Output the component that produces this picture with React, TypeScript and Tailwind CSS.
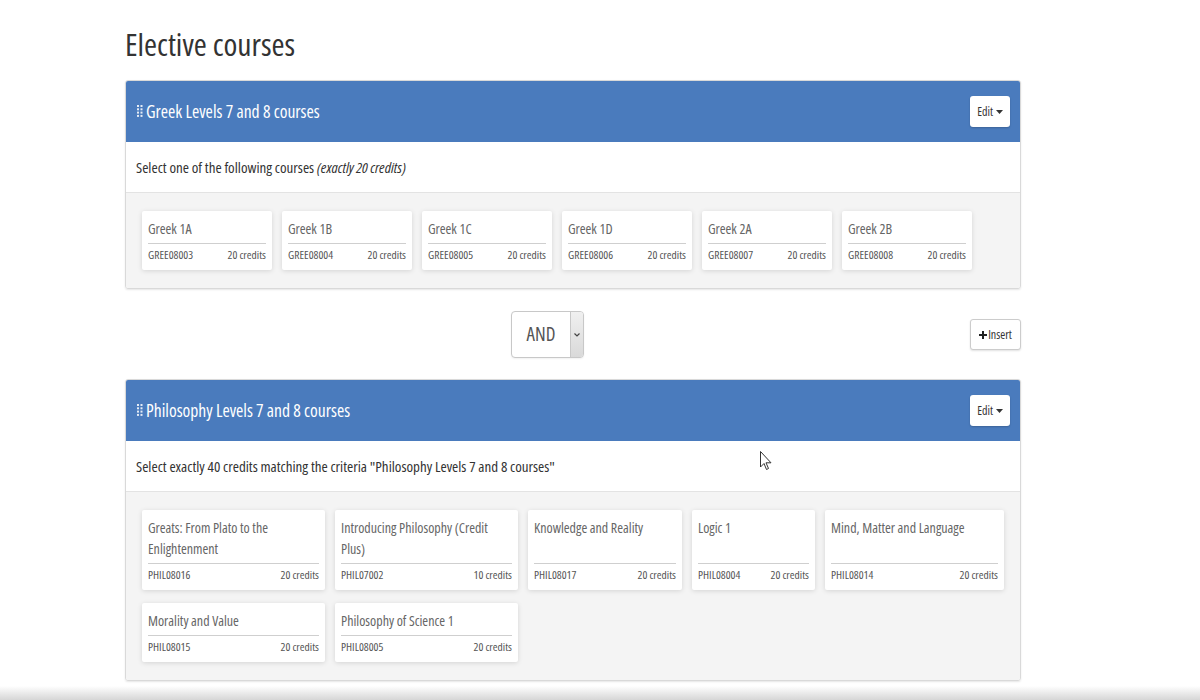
import React from "react";

type Course = { title: string; code: string; credits: string; w: number };

const greek: Course[] = [
  { title: "Greek 1A", code: "GREE08003", credits: "20 credits", w: 130 },
  { title: "Greek 1B", code: "GREE08004", credits: "20 credits", w: 130 },
  { title: "Greek 1C", code: "GREE08005", credits: "20 credits", w: 130 },
  { title: "Greek 1D", code: "GREE08006", credits: "20 credits", w: 130 },
  { title: "Greek 2A", code: "GREE08007", credits: "20 credits", w: 130 },
  { title: "Greek 2B", code: "GREE08008", credits: "20 credits", w: 130 },
];

const phil: Course[] = [
  { title: "Greats: From Plato to the Enlightenment", code: "PHIL08016", credits: "20 credits", w: 183 },
  { title: "Introducing Philosophy (Credit Plus)", code: "PHIL07002", credits: "10 credits", w: 183 },
  { title: "Knowledge and Reality", code: "PHIL08017", credits: "20 credits", w: 154 },
  { title: "Logic 1", code: "PHIL08004", credits: "20 credits", w: 123 },
  { title: "Mind, Matter and Language", code: "PHIL08014", credits: "20 credits", w: 179 },
  { title: "Morality and Value", code: "PHIL08015", credits: "20 credits", w: 183 },
  { title: "Philosophy of Science 1", code: "PHIL08005", credits: "20 credits", w: 183 },
];

function Grip() {
  return (
    <svg width="6" height="13" viewBox="0 0 6 13" className="mr-[3px] shrink-0">
      {[0, 1, 2, 3].map((r) => (
        <g key={r} fill="#ffffff" opacity="0.85">
          <rect x="0" y={r * 3.3} width="2" height="2" />
          <rect x="3.5" y={r * 3.3} width="2" height="2" />
        </g>
      ))}
    </svg>
  );
}

function Card({ c }: { c: Course }) {
  return (
    <div
      className="bg-white flex flex-col shadow-[0_1px_5px_rgba(0,0,0,0.13)] rounded-[2px]"
      style={{ width: c.w }}
    >
      <div className="flex-1 px-[6px] pt-[7px] text-[14px] leading-[21px] text-[#666]">{c.title}</div>
      <div className="mx-[6px] mt-[4px] border-t border-[#cfcfcf]" />
      <div className="flex justify-between px-[6px] pt-[3px] pb-[7px] text-[11.5px] leading-[16px] text-[#555]">
        <span>{c.code}</span>
        <span>{c.credits}</span>
      </div>
    </div>
  );
}

function Panel({ title, desc, courses }: { title: string; desc: React.ReactNode; courses: Course[] }) {
  return (
    <div className="border border-[#d9d9d9] rounded-[3px] shadow-[0_1px_2px_rgba(0,0,0,0.1)] overflow-hidden">
      <div className="h-[61px] bg-[#4a7bbd] flex items-center justify-between pl-[11px] pr-[10px]">
        <div className="flex items-center text-white text-[17.6px]">
          <Grip />
          <span>{title}</span>
        </div>
        <button className="h-[31px] px-[7px] bg-white rounded-[3px] text-[12px] text-[#333] flex items-center gap-[3px] shadow-[0_1px_2px_rgba(0,0,0,0.2)]">
          Edit
          <svg width="7" height="4" viewBox="0 0 7 4">
            <path d="M0 0h7L3.5 4z" fill="#333" />
          </svg>
        </button>
      </div>
      <div className="h-[51px] flex items-center px-[10px] text-[15px] text-[#333] bg-white border-b border-[#e3e3e3]">
        {desc}
      </div>
      <div className="bg-[#f4f4f4] pt-[18px] pb-[18px] pl-[16px] pr-[10px] flex flex-wrap gap-x-[10px] gap-y-[13px]">
        {courses.map((c) => (
          <Card key={c.code} c={c} />
        ))}
      </div>
    </div>
  );
}

export default function App() {
  return (
    <div
      className="min-h-[700px] bg-white font-stretch-condensed"
      style={{ fontFamily: "'Open Sans', 'Liberation Sans', sans-serif" }}
    >
      <div className="pl-[125px] w-[1021px] pt-[26px] pb-[20px]">
        <h1 className="text-[31.5px] leading-[36px] text-[#333] mb-[18px]">Elective courses</h1>
        <Panel
          title="Greek Levels 7 and 8 courses"
          desc={
            <span>
              Select one of the following courses <i>(exactly 20 credits)</i>
            </span>
          }
          courses={greek}
        />
        <div className="h-[90px] flex items-start">
          <div className="ml-[386px] mt-[22px] w-[73px] h-[47px] border border-[#c8c8c8] rounded-[4px] flex overflow-hidden bg-white shadow-[0_1px_2px_rgba(0,0,0,0.06)]">
            <div className="flex-1 flex items-center justify-center text-[19px] text-[#555]">AND</div>
            <div className="w-[13px] bg-gradient-to-b from-[#f0f0f0] to-[#d9d9d9] border-l border-[#c8c8c8] flex items-center justify-center">
              <svg width="6" height="4" viewBox="0 0 6 4">
                <path d="M0.5 0.5L3 3L5.5 0.5" stroke="#444" strokeWidth="1.2" fill="none" />
              </svg>
            </div>
          </div>
          <button className="ml-auto mt-[30px] h-[31px] w-[51px] border border-[#cccccc] rounded-[3px] bg-white text-[12px] text-[#333] flex items-center justify-center gap-[1px] shadow-[0_1px_2px_rgba(0,0,0,0.12)]">
            <svg width="8" height="8" viewBox="0 0 8 8">
              <path d="M3 0h2v3h3v2H5v3H3V5H0V3h3z" fill="#222" />
            </svg>
            Insert
          </button>
        </div>
        <Panel
          title="Philosophy Levels 7 and 8 courses"
          desc={<span>Select exactly 40 credits matching the criteria "Philosophy Levels 7 and 8 courses"</span>}
          courses={phil}
        />
      </div>
      <svg
        className="absolute left-[760px] top-[451px]"
        width="12"
        height="20"
        viewBox="0 0 12 20"
      >
        <path d="M0.5 0.5V16L4 12.5L6.5 18.5L8.5 17.5L6 11.8H11z" fill="#fff" stroke="#333" strokeWidth="1" />
      </svg>
      <div className="fixed bottom-0 left-0 right-0 h-[14px] bg-gradient-to-b from-white to-[#d6d6d6]" />
    </div>
  );
}
